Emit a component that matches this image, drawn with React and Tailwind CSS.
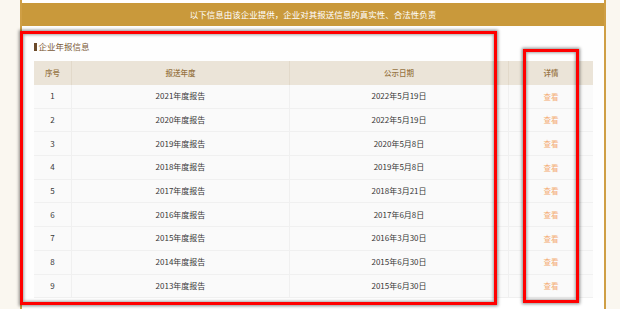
import React from "react";

const rows = [
  ["1", "2021年度报告", "2022年5月19日"],
  ["2", "2020年度报告", "2022年5月19日"],
  ["3", "2019年度报告", "2020年5月8日"],
  ["4", "2018年度报告", "2019年5月8日"],
  ["5", "2017年度报告", "2018年3月21日"],
  ["6", "2016年度报告", "2017年6月8日"],
  ["7", "2015年度报告", "2016年3月30日"],
  ["8", "2014年度报告", "2015年6月30日"],
  ["9", "2013年度报告", "2015年6月30日"],
];

export default function App() {
  return (
    <div
      className="relative w-[620px] h-[309px] overflow-hidden bg-[#faf7f0]"
      style={{ fontFamily: '"Noto Sans CJK SC", "Noto Sans", sans-serif' }}
    >
      <div className="ml-[20px] w-[586px] h-[309px] border-x-2 border-[#cf9f45] bg-white pt-[3px]">
        <div className="h-[23px] bg-[#c9993b] flex items-center justify-center text-white text-[8.5px] leading-none">
          以下信息由该企业提供，企业对其报送信息的真实性、合法性负责
        </div>
        <div className="pl-[12px] pr-[8px] bg-[#fefefe]">
          <div className="h-[35px] pt-[6px] flex items-center">
            <span className="w-[2.5px] h-[8px] bg-[#6b4a2a] mr-[2px]"></span>
            <span className="text-[8.5px] leading-none text-[#7b5a38]">企业年报信息</span>
          </div>
          <div className="w-[559px] text-[7.5px] leading-none">
            <div className="grid grid-cols-[38px_218px_219px_84px] h-[24px] bg-[#ebe4d8] text-[#977443] font-medium">
              <div className="flex items-center justify-center border-r border-[#e2d9ca]">序号</div>
              <div className="flex items-center justify-center border-r border-[#e2d9ca]">报送年度</div>
              <div className="flex items-center justify-center border-r border-[#e2d9ca]">公示日期</div>
              <div className="flex items-center justify-center">详情</div>
            </div>
            {rows.map((r) => (
              <div
                key={r[0]}
                className="grid grid-cols-[38px_218px_219px_84px] h-[23.7px] bg-[#fafafa] border-b border-[#f0f0f0] text-[#383838] text-[8px]"
              >
                <div className="flex items-center justify-center border-r border-[#f0f0f0]">{r[0]}</div>
                <div className="flex items-center justify-center border-r border-[#f0f0f0]">{r[1]}</div>
                <div className="flex items-center justify-center border-r border-[#f0f0f0]">{r[2]}</div>
                <div className="flex items-center justify-center text-[#f4ae76] text-[7.5px]">查看</div>
              </div>
            ))}
          </div>
        </div>
      </div>
      <div className="absolute left-[20px] top-[31px] w-[477px] h-[274px] border-[3px] border-[#ff0000] shadow-[0_0_3px_1px_rgba(0,0,0,0.45),inset_0_0_3px_1px_rgba(0,0,0,0.35)]"></div>
      <div className="absolute left-[523px] top-[49px] w-[56px] h-[254px] border-[3px] border-[#ff0000] shadow-[0_0_3px_1px_rgba(0,0,0,0.45),inset_0_0_3px_1px_rgba(0,0,0,0.35)]"></div>
    </div>
  );
}
